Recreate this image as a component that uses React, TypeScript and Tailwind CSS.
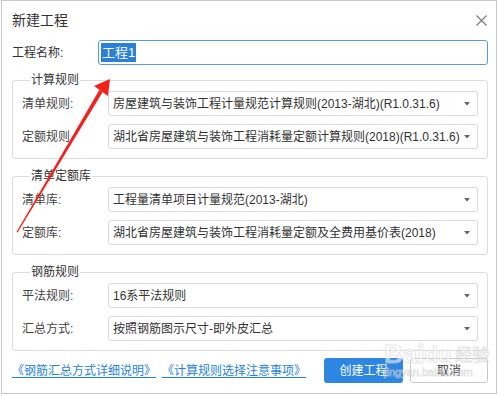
import React from "react";

const font = { fontFamily: '"Liberation Sans", "Noto Sans CJK SC", "Noto Sans", sans-serif' };

function Caret() {
  return (
    <svg width="6" height="4" viewBox="0 0 6 4" className="shrink-0">
      <path d="M0 0 L6 0 L3 3.5 Z" fill="#666" />
    </svg>
  );
}

function SelectRow({ label, value }: { label: string; value: string }) {
  return (
    <div className="flex items-center h-[25px]">
      <div className="w-[86px] shrink-0 text-[12px] text-[#444]">{label}</div>
      <div className="flex-1 h-[25px] border border-[#d9d9d9] rounded-[3px] flex items-center pl-[4px] pr-[7px] bg-white">
        <span className="flex-1 text-[12px] text-[#333] whitespace-nowrap overflow-hidden">{value}</span>
        <Caret />
      </div>
    </div>
  );
}

function Group({ title, children }: { title: string; children: React.ReactNode }) {
  return (
    <fieldset className="border border-[#dcdcdc] rounded-[3px] px-[9px] pt-[3px] pb-[9px]">
      <legend className="ml-[8px] px-[1px] text-[12px] leading-[16px] text-[#333]">{title}</legend>
      <div className="flex flex-col gap-[8px]">{children}</div>
    </fieldset>
  );
}

export default function App() {
  return (
    <div className="w-[500px] h-[396px] bg-white relative overflow-hidden" style={font}>
      <div className="ml-[1px] w-[496px] h-[394px] border border-[#c9c9c9] bg-white pl-[10px] pr-[8px] flex flex-col">
        <div className="h-[39px] flex items-center justify-between">
          <span className="text-[14px] text-[#333]">新建工程</span>
          <svg width="11" height="11" viewBox="0 0 11 11" className="mr-[1px]">
            <path d="M0.5 0.5 L10.5 10.5 M10.5 0.5 L0.5 10.5" stroke="#777" strokeWidth="1.1" />
          </svg>
        </div>
        <div className="flex items-center h-[25px]">
          <div className="w-[86px] shrink-0 text-[12px] text-[#333]">工程名称:</div>
          <div className="flex-1 h-[25px] border border-[#5a9be0] rounded-[3px] flex items-center pl-[2px]">
            <span className="bg-[#2a7fd8] text-white text-[13px] leading-[19px] px-[1px]">工程1</span>
          </div>
        </div>
        <div className="mt-[7px]">
          <Group title="计算规则">
            <SelectRow label="清单规则:" value="房屋建筑与装饰工程计量规范计算规则(2013-湖北)(R1.0.31.6)" />
            <SelectRow label="定额规则" value="湖北省房屋建筑与装饰工程消耗量定额计算规则(2018)(R1.0.31.6)" />
          </Group>
        </div>
        <div className="mt-[9px]">
          <Group title="清单定额库">
            <SelectRow label="清单库:" value="工程量清单项目计量规范(2013-湖北)" />
            <SelectRow label="定额库:" value="湖北省房屋建筑与装饰工程消耗量定额及全费用基价表(2018)" />
          </Group>
        </div>
        <div className="mt-[9px]">
          <Group title="钢筋规则">
            <SelectRow label="平法规则:" value="16系平法规则" />
            <SelectRow label="汇总方式:" value="按照钢筋图示尺寸-即外皮汇总" />
          </Group>
        </div>
        <div className="mt-[7px] flex items-center h-[25px]">
          <span className="text-[12px] text-[#1f7fe0] underline underline-offset-2 whitespace-nowrap">《钢筋汇总方式详细说明》</span>
          <span className="ml-[6px] text-[12px] text-[#1f7fe0] underline underline-offset-2 whitespace-nowrap">《计算规则选择注意事项》</span>
          <div className="flex-1" />
          <div className="w-[79px] h-[25px] rounded-[3px] bg-[#2d86e2] text-white text-[12px] flex items-center justify-center">创建工程</div>
          <div className="ml-[7px] w-[78px] h-[25px] rounded-[3px] border border-[#c8c8c8] bg-white text-[#333] text-[12px] flex items-center justify-center">取消</div>
        </div>
      </div>

      {/* annotation arrow */}
      <svg className="absolute left-0 top-0 pointer-events-none" width="500" height="396" viewBox="0 0 500 396">
        <polygon points="16.5,232 17.6,232.6 102.7,92 99.3,90" fill="#f2211c" />
        <polygon points="110,79 94,86 108,96" fill="#f2211c" />
      </svg>

      {/* watermark */}
      <div className="absolute left-[384px] top-[340px] pointer-events-none select-none opacity-60">
        <div className="flex items-end">
          <span className="text-[26px] leading-[28px] font-bold text-white" style={{ WebkitTextStroke: "1px #d8d8d8" }}>Bai</span>
          <span className="text-[22px] leading-[26px] font-bold text-white" style={{ WebkitTextStroke: "1px #d8d8d8" }}>du</span>
          <span className="ml-[4px] text-[17px] leading-[24px] text-white" style={{ WebkitTextStroke: "1px #d8d8d8" }}>经验</span>
        </div>
        <div className="text-[11px] leading-[12px] text-white -mt-[2px]" style={{ WebkitTextStroke: "0.8px #d0d0d0" }}>jingyan.baidu.com</div>
      </div>
    </div>
  );
}
